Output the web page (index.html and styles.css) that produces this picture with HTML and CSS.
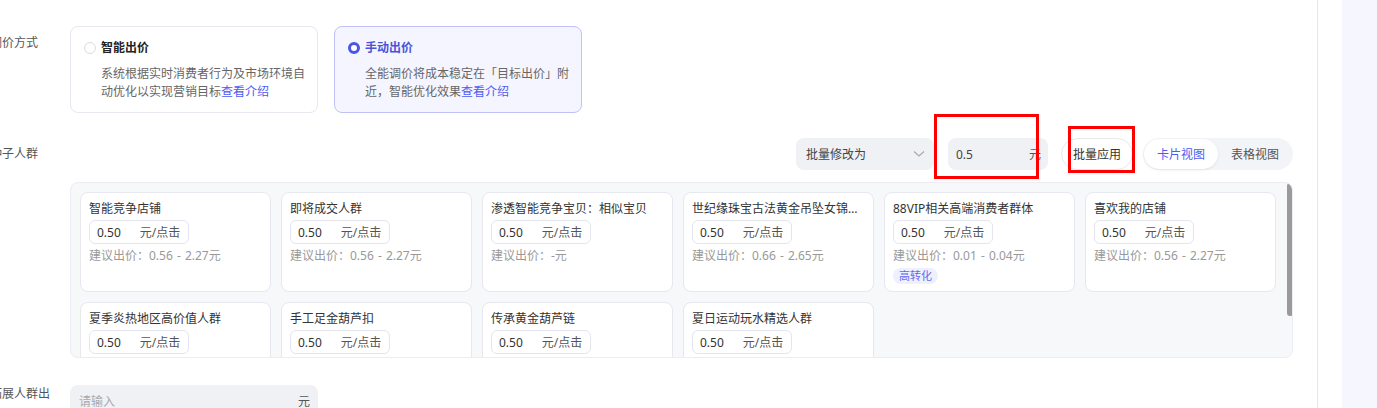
FILE: index.html
```html
<!DOCTYPE html>
<html lang="zh">
<head>
<meta charset="utf-8">
<link rel="stylesheet" href="styles.css">
</head>
<body>
<div class="page">
  <div class="main">
    <div class="row row-mode">
      <div class="label">调价方式</div>
      <div class="content mode-list">
        <div class="mode-card">
          <div class="mode-title"><span class="radio"></span>智能出价</div>
          <div class="mode-desc">系统根据实时消费者行为及市场环境自动优化以实现营销目标<a class="link">查看介绍</a></div>
        </div>
        <div class="mode-card active">
          <div class="mode-title"><span class="radio"></span>手动出价</div>
          <div class="mode-desc">全能调价将成本稳定在「目标出价」附近，智能优化效果<a class="link">查看介绍</a></div>
        </div>
      </div>
    </div>

    <div class="row row-seed">
      <div class="label label-seed">种子人群</div>
      <div class="content">
        <div class="toolbar">
          <div class="select">批量修改为
            <svg class="chev" width="12" height="8" viewBox="0 0 12 8"><path d="M1 1.5 L6 6 L11 1.5" fill="none" stroke="#a8a9b0" stroke-width="1.2"/></svg>
          </div>
          <div class="num-input"><span>0.5</span><span class="unit">元</span></div>
          <div class="btn">批量应用</div>
          <div class="seg">
            <div class="seg-item on">卡片视图</div>
            <div class="seg-item">表格视图</div>
          </div>
          <div class="mark mark-1"></div>
          <div class="mark mark-2"></div>
        </div>
        <div class="crowd-box">
          <div class="crowd-grid">
            <div class="crowd">
              <div class="c-title">智能竞争店铺</div>
              <div class="c-input"><span>0.50</span><span class="c-unit">元/点击</span></div>
              <div class="c-tip">建议出价：0.56 - 2.27元</div>
            </div>
            <div class="crowd">
              <div class="c-title">即将成交人群</div>
              <div class="c-input"><span>0.50</span><span class="c-unit">元/点击</span></div>
              <div class="c-tip">建议出价：0.56 - 2.27元</div>
            </div>
            <div class="crowd">
              <div class="c-title">渗透智能竞争宝贝：相似宝贝</div>
              <div class="c-input"><span>0.50</span><span class="c-unit">元/点击</span></div>
              <div class="c-tip">建议出价：-元</div>
            </div>
            <div class="crowd">
              <div class="c-title">世纪缘珠宝古法黄金吊坠女锦鲤转运珠</div>
              <div class="c-input"><span>0.50</span><span class="c-unit">元/点击</span></div>
              <div class="c-tip">建议出价：0.66 - 2.65元</div>
            </div>
            <div class="crowd">
              <div class="c-title">88VIP相关高端消费者群体</div>
              <div class="c-input"><span>0.50</span><span class="c-unit">元/点击</span></div>
              <div class="c-tip">建议出价：0.01 - 0.04元</div>
              <span class="tag">高转化</span>
            </div>
            <div class="crowd">
              <div class="c-title">喜欢我的店铺</div>
              <div class="c-input"><span>0.50</span><span class="c-unit">元/点击</span></div>
              <div class="c-tip">建议出价：0.56 - 2.27元</div>
            </div>
            <div class="crowd">
              <div class="c-title">夏季炎热地区高价值人群</div>
              <div class="c-input"><span>0.50</span><span class="c-unit">元/点击</span></div>
              <div class="c-tip">建议出价：0.56 - 2.27元</div>
            </div>
            <div class="crowd">
              <div class="c-title">手工足金葫芦扣</div>
              <div class="c-input"><span>0.50</span><span class="c-unit">元/点击</span></div>
              <div class="c-tip">建议出价：0.56 - 2.27元</div>
            </div>
            <div class="crowd">
              <div class="c-title">传承黄金葫芦链</div>
              <div class="c-input"><span>0.50</span><span class="c-unit">元/点击</span></div>
              <div class="c-tip">建议出价：0.56 - 2.27元</div>
            </div>
            <div class="crowd">
              <div class="c-title">夏日运动玩水精选人群</div>
              <div class="c-input"><span>0.50</span><span class="c-unit">元/点击</span></div>
              <div class="c-tip">建议出价：0.56 - 2.27元</div>
            </div>
          </div>
          <div class="scrollbar"></div>
        </div>
      </div>
    </div>

    <div class="row row-ext">
      <div class="label label-ext">拓展人群出价</div>
      <div class="content">
        <div class="ext-input"><span class="ph">请输入</span><span class="unit">元</span></div>
      </div>
    </div>
  </div>
  <div class="gutter"></div>
  <div class="side"></div>
</div>
</body>
</html>
```

FILE: styles.css
```css
* { box-sizing: border-box; }
html, body { margin: 0; padding: 0; }
body {
  background: #fff;
  font-family: "Noto Sans", "Noto Sans CJK SC", sans-serif;
  font-size: 12px;
  color: #333;
  overflow: hidden;
  height: 408px;
}
.page { display: flex; height: 408px; }
.main {
  width: 1318px;
  flex: none;
  border-right: 1px solid #e6e6f0;
  padding-top: 26px;
  overflow: hidden;
}
.gutter { width: 24px; flex: none; }
.side { flex: 1; background: #f6f6ff; }

.row {
  display: grid;
  grid-template-columns: 80px 1223px;
  margin-left: -10px;
}
.label {
  color: #555;
  line-height: 18px;
  padding-right: 14px;
  padding-top: 8px;
}
.label-seed { padding-top: 7px; }
.label-ext { padding-top: 0; line-height: 17px; }

/* bidding mode cards */
.mode-list { display: flex; gap: 16px; }
.mode-card {
  width: 248px;
  height: 87px;
  border: 1px solid #e6e7ef;
  border-radius: 8px;
  background: #fff;
  padding: 12px 6px 0 13px;
}
.mode-card.active {
  border-color: #bfc2f6;
  background: #f5f5ff;
}
.mode-title {
  display: flex;
  align-items: center;
  font-weight: 700;
  line-height: 18px;
  color: #222;
}
.active .mode-title { color: #4a52d8; }
.radio {
  width: 12px;
  height: 12px;
  border-radius: 50%;
  border: 1px solid #dcdde5;
  background: #fff;
  margin-right: 5px;
  flex: none;
}
.active .radio {
  border: 3.5px solid #4b55e6;
}
.mode-desc {
  margin-top: 8px;
  padding-left: 17px;
  color: #666;
  line-height: 18px;
}
.link { color: #4e5cf0; }

/* seed crowd */
.row-seed { margin-top: 25px; }
.toolbar {
  position: relative;
  display: flex;
  justify-content: flex-end;
  align-items: center;
  height: 32px;
}
.select {
  width: 138px;
  height: 32px;
  background: #f0f1f5;
  border-radius: 8px;
  padding: 0 10px;
  display: flex;
  align-items: center;
  justify-content: space-between;
  color: #444;
}
.chev { margin-right: -1px; }
.num-input {
  margin-left: 14px;
  width: 100px;
  height: 32px;
  background: #f0f1f5;
  border-radius: 8px;
  padding: 0 7px 0 8px;
  display: flex;
  align-items: center;
  justify-content: space-between;
  color: #444;
}
.num-input .unit { color: #555; }
.btn {
  margin-left: 13px;
  width: 72px;
  height: 32px;
  border: 1px solid #e8e8f0;
  border-radius: 16px;
  background: #fff;
  display: flex;
  align-items: center;
  justify-content: center;
  color: #333;
}
.seg {
  margin-left: 10px;
  width: 150px;
  height: 32px;
  background: #f3f4f7;
  border-radius: 16px;
  padding: 1px;
  display: flex;
  align-items: center;
}
.seg-item {
  width: 74px;
  height: 30px;
  border-radius: 15px;
  display: flex;
  align-items: center;
  justify-content: center;
  color: #555;
}
.seg-item.on {
  background: #fff;
  color: #4e5cf0;
  box-shadow: 0 1px 3px rgba(0, 0, 0, 0.08);
}
.mark {
  position: absolute;
  border: 3px solid #ff0000;
}
.mark-1 { left: 864px; top: -24px; width: 105px; height: 65px; }
.mark-2 { left: 998px; top: -12px; width: 67px; height: 47px; }

.crowd-box {
  position: relative;
  margin-top: 12px;
  height: 176px;
  background: #f7f8fa;
  border: 1px solid #ececf2;
  border-radius: 8px;
  overflow: hidden;
  padding: 9px 0 0 9px;
}
.crowd-grid {
  display: grid;
  grid-template-columns: repeat(6, 191px);
  gap: 10px;
}
.crowd {
  height: 100px;
  background: #fff;
  border: 1px solid #e6e7ef;
  border-radius: 8px;
  padding: 7px 8px 0 8px;
}
.c-title {
  line-height: 18px;
  color: #333;
  white-space: nowrap;
  overflow: hidden;
  text-overflow: ellipsis;
}
.c-input {
  margin-top: 2px;
  width: 100px;
  height: 24px;
  border: 1px solid #e4e5ef;
  border-radius: 6px;
  padding: 0 0 0 7px;
  display: flex;
  align-items: center;
  color: #333;
  background: #fff;
}
.c-unit { margin-left: 19px; color: #555; }
.c-tip {
  margin-top: 3px;
  line-height: 18px;
  color: #999;
  word-spacing: 1px;
}
.tag {
  display: inline-block;
  margin-top: 3px;
  height: 16px;
  line-height: 16px;
  padding: 0 6px;
  border-radius: 8px;
  background: #eef0fe;
  color: #5e6cf0;
  font-size: 11px;
}
.scrollbar {
  position: absolute;
  left: 1216px;
  top: 0;
  width: 6px;
  height: 133px;
  background: #9a9a9a;
  border-radius: 3px;
}

/* extension crowd */
.row-ext { margin-top: 27px; }
.ext-input {
  width: 248px;
  height: 32px;
  background: #f0f1f5;
  border-radius: 8px;
  padding: 0 8px 0 9px;
  display: flex;
  justify-content: space-between;
  align-items: center;
}
.ph { color: #aaa; }
.ext-input .unit { color: #555; }
```
